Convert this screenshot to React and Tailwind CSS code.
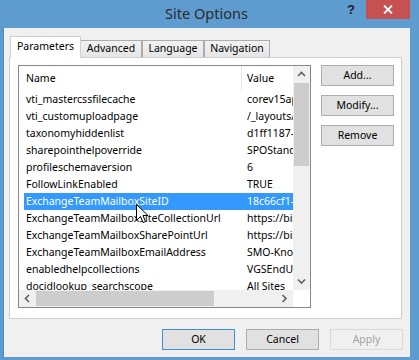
import React from "react";

const rows = [
  ["vti_mastercssfilecache", "corev15app.css"],
  ["vti_customuploadpage", "/_layouts/15/upload.aspx"],
  ["taxonomyhiddenlist", "d1ff1187-0000"],
  ["sharepointhelpoverride", "SPOStandard"],
  ["profileschemaversion", "6"],
  ["FollowLinkEnabled", "TRUE"],
  ["ExchangeTeamMailboxSiteID", "18c66cf1-0000"],
  ["ExchangeTeamMailboxSiteCollectionUrl", "https://bing.com"],
  ["ExchangeTeamMailboxSharePointUrl", "https://bing.com"],
  ["ExchangeTeamMailboxEmailAddress", "SMO-Knowledge"],
  ["enabledhelpcollections", "VGSEndUser"],
  ["docidlookup_searchscope", "All Sites"],
];

function Chevron({ dir }) {
  const paths = {
    up: "M1 5 L4.5 1.5 L8 5",
    down: "M1 1.5 L4.5 5 L8 1.5",
    left: "M5 1 L1.5 4.5 L5 8",
    right: "M1.5 1 L5 4.5 L1.5 8",
  };
  const vertical = dir === "up" || dir === "down";
  return (
    <svg
      width={vertical ? 9 : 7}
      height={vertical ? 7 : 9}
      viewBox={vertical ? "0 0 9 7" : "0 0 7 9"}
    >
      <path d={paths[dir]} fill="none" stroke="#606060" strokeWidth="1.6" />
    </svg>
  );
}

function Btn({ children, variant }) {
  const base =
    "w-[73px] h-[21px] flex items-center justify-center text-[10.5px] leading-none border";
  if (variant === "default")
    return (
      <div className={base + " bg-[#e1e1e1] border-[#3c8fde] text-black"}>
        {children}
      </div>
    );
  if (variant === "disabled")
    return (
      <div className={base + " bg-[#f0f0f0] border-[#d9d9d9] text-[#a3a3a3]"}>
        {children}
      </div>
    );
  return (
    <div className={base + " bg-[#e1e1e1] border-[#adadad] text-black"}>
      {children}
    </div>
  );
}

export default function App() {
  return (
    <div className="w-[419px] h-[360px] bg-[#5e9bcf] flex flex-col overflow-hidden relative font-['Noto_Sans',sans-serif] select-none">
      {/* Title bar */}
      <div className="h-[28px] ml-[3px] mr-[9px] relative flex justify-center">
        <span className="text-[14.5px] leading-[28px] text-[#2b2b2b] -mt-[1px]">
          Site Options
        </span>
        <div className="absolute right-0 top-0 flex items-start">
          <span className="text-[13px] font-bold text-[#222] leading-[19px] mr-[11px] font-['Liberation_Sans',sans-serif]">
            ?
          </span>
          <div className="w-[44px] h-[19px] bg-[#c75050] flex items-center justify-center">
            <svg width="10" height="9" viewBox="0 0 10 9">
              <path
                d="M1 0.5 L9 8.5 M9 0.5 L1 8.5"
                stroke="#fff"
                strokeWidth="1.8"
              />
            </svg>
          </div>
        </div>
      </div>

      {/* Dialog body */}
      <div className="h-[329px] ml-[3px] mr-[9px] bg-[#f0f0f0] flex flex-col pt-[8px] border-l border-[#4f8bbf]">
        {/* Tabs */}
        <div className="ml-[6px] h-[22px] flex items-end relative z-10 text-[10.5px] text-black">
          <div className="w-[71px] h-[22px] bg-white border-t border-l border-r border-[#cfcfcf] flex items-center justify-center pb-[1px]">
            Parameters
          </div>
          <div className="w-[61px] h-[17px] mb-[1px] bg-gradient-to-b from-[#f2f2f2] to-[#e5e5e5] border-t border-r border-[#acacac] flex items-center justify-center">
            Advanced
          </div>
          <div className="w-[62px] h-[17px] mb-[1px] bg-gradient-to-b from-[#f2f2f2] to-[#e5e5e5] border-t border-l border-r border-[#acacac] flex items-center justify-center">
            Language
          </div>
          <div className="w-[66px] h-[17px] mb-[1px] bg-gradient-to-b from-[#f2f2f2] to-[#e5e5e5] border-t border-l border-r border-[#acacac] flex items-center justify-center">
            Navigation
          </div>
        </div>

        {/* Tab page */}
        <div className="ml-[5px] w-[393px] h-[262px] -mt-px border border-[#cfcfcf] bg-white flex items-start pl-[8px] pt-[7px] gap-[10px]">
          {/* List view */}
          <div className="w-[293px] h-[243px] border border-[#828790] flex flex-col relative">
            <div className="h-[224px] flex">
              <div className="w-[274px] flex flex-col overflow-hidden text-[10.5px] text-black">
                {/* Header */}
                <div className="h-[25px] flex shrink-0">
                  <div className="w-[223px] border-r border-[#e5e5e5] pl-[7px] flex items-center pt-[1px]">
                    Name
                  </div>
                  <div className="flex-1 pl-[5px] flex items-center pt-[1px]">
                    Value
                  </div>
                </div>
                {/* Rows */}
                {rows.map(([name, value], i) => {
                  const sel = i === 6;
                  return (
                    <div
                      key={name}
                      className={
                        "h-[17px] shrink-0 ml-[5px] flex items-center whitespace-nowrap " +
                        (sel ? "bg-[#3399ff] text-white" : "")
                      }
                    >
                      <div className="w-[217px] shrink-0 pl-[2px] overflow-hidden">
                        {name}
                      </div>
                      <div className="flex-1 pl-[6px] overflow-hidden">
                        {value}
                      </div>
                    </div>
                  );
                })}
              </div>
              {/* Vertical scrollbar */}
              <div className="w-[17px] bg-[#f0f0f0] flex flex-col">
                <div className="h-[17px] flex items-center justify-center">
                  <Chevron dir="up" />
                </div>
                <div className="h-[83px] mx-[1px] bg-[#cdcdcd]" />
                <div className="flex-1" />
                <div className="h-[17px] flex items-center justify-center">
                  <Chevron dir="down" />
                </div>
              </div>
            </div>
            {/* Horizontal scrollbar */}
            <div className="h-[17px] flex">
              <div className="w-[274px] bg-[#f0f0f0] flex items-center">
                <div className="w-[17px] h-[17px] flex items-center justify-center">
                  <Chevron dir="left" />
                </div>
                <div className="w-[178px] h-[15px] bg-[#cdcdcd]" />
                <div className="flex-1" />
                <div className="w-[17px] h-[17px] flex items-center justify-center">
                  <Chevron dir="right" />
                </div>
              </div>
              <div className="w-[17px] bg-white" />
            </div>

            {/* Mouse cursor */}
            <svg
              className="absolute left-[117px] top-[138px]"
              width="13"
              height="21"
              viewBox="0 0 13 21"
            >
              <path
                d="M0.5 0.5 L0.5 16.5 L4.5 12.5 L7 18.5 L9.5 17.5 L7 11.5 L12 11.5 Z"
                fill="#fff"
                stroke="#000"
                strokeWidth="1"
                strokeLinejoin="miter"
              />
            </svg>
          </div>

          {/* Side buttons */}
          <div className="flex flex-col gap-[9px]">
            <Btn>Add...</Btn>
            <Btn>Modify...</Btn>
            <Btn>Remove</Btn>
          </div>
        </div>

        {/* Bottom buttons */}
        <div className="mt-[10px] ml-[158px] flex gap-[11px]">
          <Btn variant="default">OK</Btn>
          <Btn>Cancel</Btn>
          <Btn variant="disabled">Apply</Btn>
        </div>
      </div>
    </div>
  );
}
